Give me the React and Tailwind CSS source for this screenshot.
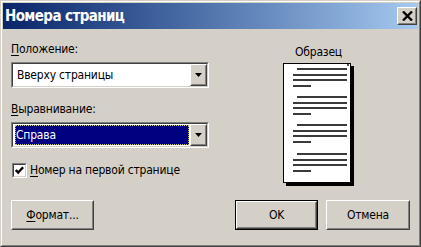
import React from "react";

const FONT = "font-['DejaVu_Sans_Condensed','DejaVu_Sans',sans-serif]";

function Raised({ className = "", children }) {
  return (
    <div className={`border border-t-white border-l-white border-r-[#404040] border-b-[#404040] bg-[#d4d0c8] ${className}`}>
      <div className="w-full h-full border border-t-[#d4d0c8] border-l-[#d4d0c8] border-r-[#808080] border-b-[#808080] flex items-center justify-center">
        {children}
      </div>
    </div>
  );
}

function Arrow() {
  return (
    <svg width="7" height="4" viewBox="0 0 7 4">
      <path d="M0 0H7L3.5 4Z" fill="#000" />
    </svg>
  );
}

function Combo({ value, selected }) {
  return (
    <div className="w-[198px] h-[26px] border border-t-[#808080] border-l-[#808080] border-r-white border-b-white">
      <div className="w-full h-full border border-t-[#404040] border-l-[#404040] border-r-[#d4d0c8] border-b-[#d4d0c8] bg-white flex items-center pl-[2px] pr-0">
        <div className="flex-1 h-full flex items-center py-[1px] pr-[1px]">
          {selected ? (
            <div className="w-full h-full bg-[#000080] text-white flex items-center pl-[1px] outline outline-dotted outline-[#c8c864] -outline-offset-1">
              {value}
            </div>
          ) : (
            <div className="pl-[2px] text-black">{value}</div>
          )}
        </div>
        <Raised className="w-[17px] h-full">
          <Arrow />
        </Raised>
      </div>
    </div>
  );
}

function Label({ first, rest, className = "" }) {
  return (
    <div className={`h-[16px] leading-[16px] text-black whitespace-nowrap ${className}`}>
      <span className="underline underline-offset-2">{first}</span>
      {rest}
    </div>
  );
}

function Button({ children, isDefault, className = "" }) {
  const inner = <Raised className="w-full h-full text-black">{children}</Raised>;
  return isDefault ? (
    <div className={`border border-black ${className}`}>{inner}</div>
  ) : (
    <div className={className}>{inner}</div>
  );
}

function PagePreview() {
  const groups = [6, 34, 62, 91];
  return (
    <svg width="71" height="123" viewBox="0 0 71 123">
      <rect x="3" y="3" width="68" height="120" fill="#000" />
      <rect x="0.5" y="0.5" width="67" height="119" fill="#fff" stroke="#000" />
      <rect x="64" y="1" width="2" height="2" fill="#555" />
      {groups.map((y) => (
        <g key={y} stroke="#3a3a3a" strokeWidth="2">
          <line x1="14" y1={y} x2="64" y2={y} />
          <line x1="10" y1={y + 6} x2="64" y2={y + 6} />
          <line x1="10" y1={y + 11} x2="64" y2={y + 11} />
          <line x1="10" y1={y + 17} x2="28" y2={y + 17} />
        </g>
      ))}
    </svg>
  );
}

export default function App() {
  return (
    <div className={`w-[421px] h-[247px] bg-[#d4d0c8] border border-t-[#d4d0c8] border-l-[#d4d0c8] border-r-[#404040] border-b-[#404040] text-[12px] tracking-[-0.2px] ${FONT}`}>
      <div className="w-full h-full border border-t-white border-l-white border-r-[#808080] border-b-[#808080] p-[1px] flex flex-col">
        {/* title bar */}
        <div className="h-[26px] bg-gradient-to-r from-[#0a246a] to-[#a6caf0] flex items-center justify-between pl-[2px] pr-[1px]">
          <span className="text-white font-bold text-[15px] tracking-[-0.6px] leading-none">Номера страниц</span>
          <Raised className="w-[20px] h-[18px]">
            <svg width="11" height="10" viewBox="0 0 11 10">
              <path d="M1 0.5L10 9.5M10 0.5L1 9.5" stroke="#000" strokeWidth="2.4" />
            </svg>
          </Raised>
        </div>

        <div className="flex pl-[8px]">
          {/* left column */}
          <div className="w-[198px] flex flex-col pt-[12px]">
            <Label first="П" rest="оложение:" />
            <div className="mt-[5px]">
              <Combo value="Вверху страницы" />
            </div>
            <Label first="В" rest="ыравнивание:" className="mt-[13px]" />
            <div className="mt-[5px]">
              <Combo value="Справа" selected />
            </div>
            <div className="flex items-center mt-[14px] ml-[1px]">
              <div className="w-[15px] h-[15px] border border-t-[#808080] border-l-[#808080] border-r-white border-b-white">
                <div className="w-full h-full border border-t-[#404040] border-l-[#404040] border-r-[#d4d0c8] border-b-[#d4d0c8] bg-white flex items-center justify-center">
                  <svg width="9" height="9" viewBox="0 0 9 9">
                    <path d="M0.8 4L3.2 6.6L8.2 1.2" stroke="#000" strokeWidth="2.4" fill="none" />
                  </svg>
                </div>
              </div>
              <Label first="Н" rest="омер на первой странице" className="ml-[3px]" />
            </div>
          </div>

          {/* right column */}
          <div className="w-[71px] ml-[74px] flex flex-col items-center pt-[15px]">
            <div className="h-[16px] leading-[16px] text-black">Образец</div>
            <div className="mt-[3px]">
              <PagePreview />
            </div>
          </div>
        </div>

        {/* buttons */}
        <div className="flex items-start mt-[14px] pl-[8px] pr-[8px]">
          <Button className="w-[83px] h-[30px]">
            <span>
              <span className="underline underline-offset-2">Ф</span>ормат...
            </span>
          </Button>
          <div className="flex-1" />
          <Button isDefault className="w-[83px] h-[30px]">OK</Button>
          <Button className="w-[84px] h-[30px] ml-[8px]">Отмена</Button>
        </div>
      </div>
    </div>
  );
}
